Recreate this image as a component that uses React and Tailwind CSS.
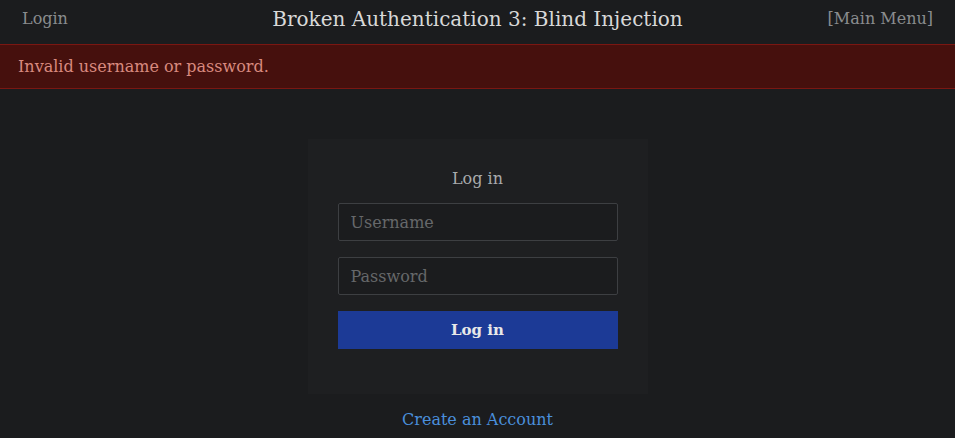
import React from 'react'

const App = () => {
  return (
    <main className='min-h-[438px] bg-[#1b1c1e] font-["DejaVu_Serif",serif] flex flex-col'>
      {/* Top bar */}
      <header className='h-[44px] flex flex-row items-center justify-between px-[22px] pb-[6px]'>
        <span className='text-[#8a8c8e] text-[16px] w-[120px]'>Login</span>
        <h1 className='text-[#d8d8d8] text-[20px]'>Broken Authentication 3: Blind Injection</h1>
        <span className='text-[#8a8c8e] text-[16px] w-[120px] text-right'>[Main Menu]</span>
      </header>
      {/* Error */}
      <div className='h-[45px] bg-[#46100d] border-y border-[#7a1712] flex items-center px-[18px] text-[#d98a7f] text-[16px]'>
        Invalid username or password.
      </div>
      {/* Login card */}
      <div className='flex flex-col items-center mt-[50px]'>
        <div className='w-[340px] h-[255px] bg-[#1e1f21] flex flex-col items-center pt-[29px] px-[30px]'>
          <p className='text-[#a9abad] text-[16px] leading-[22px]'>Log in</p>
          <input className='mt-[13px] w-full h-[38px] bg-[#1b1c1e] border border-[#3d3f42] rounded-[2px] px-[12px] text-[16px] text-[#d8d8d8] placeholder-[#66686a] outline-none' placeholder='Username' />
          <input className='mt-[16px] w-full h-[38px] bg-[#1b1c1e] border border-[#3d3f42] rounded-[2px] px-[12px] text-[16px] text-[#d8d8d8] placeholder-[#66686a] outline-none' placeholder='Password' type='password' />
          <button className='mt-[16px] w-full h-[38px] bg-[#1c3a96] text-[#e8e8e8] font-bold text-[15px]'>Log in</button>
        </div>
        <a className='mt-[14px] text-[#4a8fdc] text-[16px]'>Create an Account</a>
      </div>
    </main>
  )
}

export default App
